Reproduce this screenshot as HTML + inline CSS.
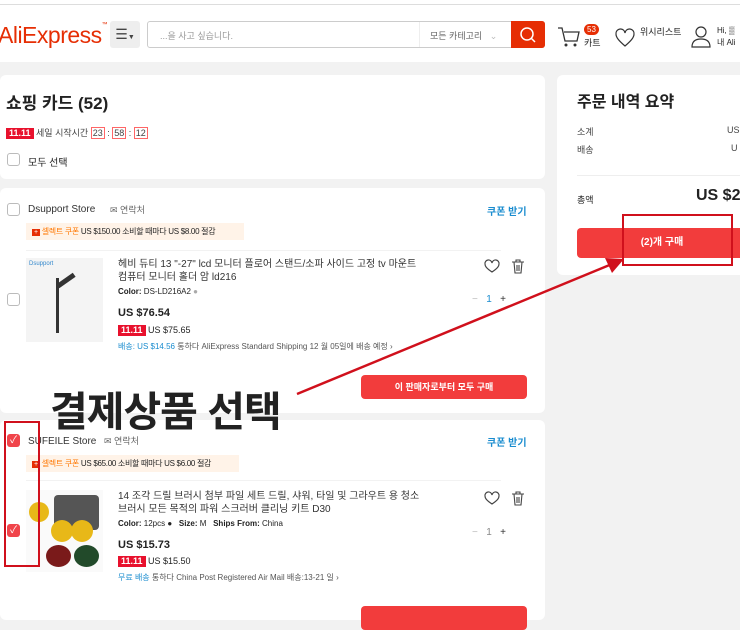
<!DOCTYPE html>
<html><head><meta charset="utf-8"><style>
*{margin:0;padding:0;box-sizing:border-box}
body{width:740px;height:616px;overflow:hidden;background:#f2f2f2;font-family:"Liberation Sans","Noto Sans CJK KR",sans-serif;color:#222;position:relative;font-size:11px}
.a{position:absolute;white-space:nowrap}
.card{position:absolute;background:#fff;border-radius:6px}
.cb{position:absolute;width:13px;height:13px;border:1px solid #bbb;border-radius:3px;background:#fff}
.cbr{position:absolute;width:13px;height:13px;border-radius:3px;background:#f0444a;color:#fff;font-size:10px;line-height:13px;text-align:center}
.tag{background:#e8112d;color:#fff;font-weight:bold;font-size:9px;padding:0 3px;line-height:11px;display:inline-block}
.blue{color:#1a8ccf}
.btn{position:absolute;background:#f23c3c;color:#fff;border-radius:4px;text-align:center;font-weight:bold}
</style></head><body>
<div class="a" style="left:0;top:0;width:740px;height:62px;background:#fff"></div>
<div class="a" style="left:0;top:4px;width:740px;height:1px;background:#ddd"></div>
<div class="a" style="left:-2px;top:22px;font-size:23px;color:#e62e04;letter-spacing:-0.5px">AliExpress<span style="font-size:6px;vertical-align:top">™</span></div>
<div class="a" style="left:110px;top:21px;width:30px;height:27px;background:#eee;border-radius:3px;text-align:center;line-height:27px;font-size:14px;color:#444">☰<span style="font-size:7px">▼</span></div>
<div class="a" style="left:147px;top:21px;width:398px;height:27px;border:1px solid #ccc;border-radius:3px"></div>
<div class="a" style="left:160px;top:29px;font-size:9px;color:#999">...을 사고 싶습니다.</div>
<div class="a" style="left:419px;top:22px;width:1px;height:25px;background:#eee"></div>
<div class="a" style="left:430px;top:29px;font-size:9px;color:#666">모든 카테고리 &nbsp; <span style="color:#bbb">⌄</span></div>
<div class="a" style="left:511px;top:21px;width:34px;height:27px;background:#e62e04;border-radius:0 3px 3px 0"></div>
<svg class="a" style="left:518px;top:25px" width="20" height="20"><circle cx="9" cy="9" r="6" stroke="#fff" stroke-width="1.5" fill="none"/><line x1="13" y1="13" x2="17" y2="17" stroke="#fff" stroke-width="1.5"/></svg>
<svg class="a" style="left:556px;top:24px" width="26" height="26"><path d="M2 4h4l3 13h12l2-9H8" stroke="#333" stroke-width="1.3" fill="none"/><circle cx="10" cy="21" r="1.5" fill="#333"/><circle cx="19" cy="21" r="1.5" fill="#333"/></svg>
<div class="a" style="left:584px;top:24px;width:15px;height:11px;background:#e62e04;border-radius:6px;color:#fff;font-size:8px;text-align:center;line-height:11px">53</div>
<div class="a" style="left:584px;top:36px;font-size:9px">카트</div>
<svg class="a" style="left:614px;top:27px" width="22" height="22"><path d="M11 19C4 13 2 10 2 7a4.5 4.5 0 0 1 9-1a4.5 4.5 0 0 1 9 1c0 3-2 6-9 12z" stroke="#333" stroke-width="1.2" fill="none"/></svg>
<div class="a" style="left:640px;top:25px;font-size:9px">위시리스트</div>
<svg class="a" style="left:690px;top:25px" width="22" height="24"><circle cx="11" cy="7" r="5" stroke="#333" stroke-width="1.2" fill="none"/><path d="M2 22c0-6 4-8 9-8s9 2 9 8z" stroke="#333" stroke-width="1.2" fill="none"/></svg>
<div class="a" style="left:717px;top:25px;font-size:8px;line-height:12px">Hi, ▒<br>내 Ali</div>

<div class="card" style="left:0;top:75px;width:545px;height:104px"></div>
<div class="a" style="left:6px;top:89px;font-size:17px;font-weight:bold">쇼핑 카드 (52)</div>
<div class="a" style="left:6px;top:126px;font-size:9px;color:#444"><span class="tag">11.11</span> 세일 시작시간 <span style="border:1px solid #f66;padding:0 1px">23</span> : <span style="border:1px solid #f66;padding:0 1px">58</span> : <span style="border:1px solid #f66;padding:0 1px">12</span></div>
<div class="cb" style="left:7px;top:153px"></div>
<div class="a" style="left:28px;top:154px;font-size:10px">모두 선택</div>

<div class="card" style="left:0;top:188px;width:545px;height:225px"></div>
<div class="cb" style="left:7px;top:203px"></div>
<div class="a" style="left:28px;top:204px;font-size:10px;color:#333">Dsupport Store</div>
<div class="a" style="left:110px;top:203px;font-size:9px;color:#666">✉ 연락처</div>
<div class="a blue" style="left:487px;top:203px;font-size:10px;font-weight:bold">쿠폰 받기</div>
<div class="a" style="left:26px;top:223px;width:218px;height:17px;background:#fff3e8;font-size:8px;line-height:17px;padding-left:6px;letter-spacing:-0.3px"><span style="background:#e62e04;color:#fff;font-size:7px;padding:0 2px">+</span> <span style="color:#f70">셀렉트 쿠폰</span> US $150.00 소비할 때마다 US $8.00 절감</div>
<div class="a" style="left:26px;top:250px;width:475px;height:1px;background:#f2f2f2"></div>
<div class="cb" style="left:7px;top:293px"></div>
<div class="a" style="left:26px;top:258px;width:77px;height:84px;background:#f4f4f4"><div style="position:absolute;left:30px;top:20px;width:3px;height:55px;background:#333"></div><div style="position:absolute;left:30px;top:20px;width:20px;height:5px;background:#333;transform:rotate(-35deg)"></div><div style="font-size:6px;color:#38c;padding:3px">Dsupport</div></div>
<div class="a" style="left:118px;top:258px;font-size:10px;line-height:13px;color:#333">헤비 듀티 13 "-27" lcd 모니터 플로어 스탠드/소파 사이드 고정 tv 마운트<br>컴퓨터 모니터 홀더 암 ld216</div>
<div class="a" style="left:118px;top:287px;font-size:8px"><b>Color:</b> DS-LD216A2 <span style="color:#aaa">●</span></div>
<div class="a" style="left:118px;top:307px;font-size:11px;font-weight:bold">US $76.54</div>
<div class="a" style="left:118px;top:325px;font-size:9px"><span class="tag">11.11</span> US $75.65</div>
<div class="a" style="left:118px;top:341px;font-size:8px;color:#555"><span class="blue">배송: US $14.56</span> 통하다 AliExpress Standard Shipping 12 월 05일에 배송 예정 ›</div>
<svg class="a" style="left:484px;top:259px" width="16" height="15"><path d="M8 13C2 9 1 7 1 5a3.3 3.3 0 0 1 7-1a3.3 3.3 0 0 1 7 1c0 2-1 4-7 8z" stroke="#444" stroke-width="1.2" fill="none"/></svg>
<svg class="a" style="left:511px;top:259px" width="14" height="15"><path d="M1 3h12M5 3V1h4v2M3 3l1 11h6l1-11M6 6v6M8 6v6" stroke="#444" stroke-width="1.1" fill="none"/></svg>
<div class="a" style="left:472px;top:294px;font-size:10px;color:#bbb">−&nbsp;&nbsp;&nbsp;<span class="blue">1</span>&nbsp;&nbsp;&nbsp;<span style="color:#333">+</span></div>
<div class="btn" style="left:361px;top:375px;width:166px;height:24px;line-height:24px;font-size:9px">이 판매자로부터 모두 구매</div>

<div class="card" style="left:0;top:420px;width:545px;height:200px"></div>
<div class="cbr" style="left:7px;top:434px">✓</div>
<div class="a" style="left:28px;top:436px;font-size:10px;color:#333">SUFEILE Store</div>
<div class="a" style="left:104px;top:434px;font-size:9px;color:#666">✉ 연락처</div>
<div class="a blue" style="left:487px;top:434px;font-size:10px;font-weight:bold">쿠폰 받기</div>
<div class="a" style="left:26px;top:455px;width:213px;height:17px;background:#fff3e8;font-size:8px;line-height:17px;padding-left:6px;letter-spacing:-0.3px"><span style="background:#e62e04;color:#fff;font-size:7px;padding:0 2px">+</span> <span style="color:#f70">셀렉트 쿠폰</span> US $65.00 소비할 때마다 US $6.00 절감</div>
<div class="a" style="left:26px;top:480px;width:475px;height:1px;background:#f2f2f2"></div>
<div class="cbr" style="left:7px;top:524px">✓</div>
<div class="a" style="left:26px;top:490px;width:77px;height:82px;background:#fafafa;overflow:hidden"><div style="position:absolute;left:28px;top:5px;width:45px;height:35px;background:#555;border-radius:4px"></div><div style="position:absolute;left:25px;top:30px;width:22px;height:22px;background:#e8b818;border-radius:50%"></div><div style="position:absolute;left:45px;top:30px;width:22px;height:22px;background:#e8b818;border-radius:50%"></div><div style="position:absolute;left:20px;top:55px;width:25px;height:22px;background:#7a1a1a;border-radius:50%"></div><div style="position:absolute;left:48px;top:55px;width:25px;height:22px;background:#224a2a;border-radius:50%"></div><div style="position:absolute;left:3px;top:12px;width:20px;height:20px;background:#e8b818;border-radius:50%"></div></div>
<div class="a" style="left:118px;top:490px;font-size:10px;line-height:13px;color:#333">14 조각 드릴 브러시 첨부 파일 세트 드릴, 샤워, 타일 및 그라우트 용 청소<br>브러시 모든 목적의 파워 스크러버 클리닝 키트 D30</div>
<div class="a" style="left:118px;top:519px;font-size:8px"><b>Color:</b> 12pcs ● &nbsp;&nbsp;<b>Size:</b> M &nbsp;&nbsp;<b>Ships From:</b> China</div>
<div class="a" style="left:118px;top:539px;font-size:11px;font-weight:bold">US $15.73</div>
<div class="a" style="left:118px;top:556px;font-size:9px"><span class="tag">11.11</span> US $15.50</div>
<div class="a" style="left:118px;top:572px;font-size:8px;color:#555"><span class="blue">무료 배송</span> 통하다 China Post Registered Air Mail 배송:13-21 일 ›</div>
<svg class="a" style="left:484px;top:491px" width="16" height="15"><path d="M8 13C2 9 1 7 1 5a3.3 3.3 0 0 1 7-1a3.3 3.3 0 0 1 7 1c0 2-1 4-7 8z" stroke="#444" stroke-width="1.2" fill="none"/></svg>
<svg class="a" style="left:511px;top:491px" width="14" height="15"><path d="M1 3h12M5 3V1h4v2M3 3l1 11h6l1-11M6 6v6M8 6v6" stroke="#444" stroke-width="1.1" fill="none"/></svg>
<div class="a" style="left:472px;top:527px;font-size:10px;color:#bbb">−&nbsp;&nbsp;&nbsp;<span style="color:#888">1</span>&nbsp;&nbsp;&nbsp;<span style="color:#333">+</span></div>
<div class="btn" style="left:361px;top:606px;width:166px;height:24px"></div>

<div class="card" style="left:557px;top:75px;width:190px;height:200px"></div>
<div class="a" style="left:577px;top:88px;font-size:16px;font-weight:bold">주문 내역 요약</div>
<div class="a" style="left:577px;top:125px;font-size:9px;color:#444">소계</div>
<div class="a" style="left:727px;top:125px;font-size:9px;color:#444">US</div>
<div class="a" style="left:577px;top:143px;font-size:9px;color:#444">배송</div>
<div class="a" style="left:731px;top:143px;font-size:9px;color:#444">U</div>
<div class="a" style="left:577px;top:175px;width:163px;height:1px;background:#eee"></div>
<div class="a" style="left:577px;top:193px;font-size:9px">총액</div>
<div class="a" style="left:696px;top:187px;font-size:16px;font-weight:bold">US $2</div>
<div class="btn" style="left:577px;top:228px;width:170px;height:30px;line-height:30px;font-size:10px">(2)개 구매</div>

<div class="a" style="left:50px;top:378px;font-size:41px;font-weight:bold;color:#222;letter-spacing:-1px">결제상품 선택</div>
<svg class="a" style="left:0;top:0" width="740" height="616"><line x1="297" y1="394" x2="612" y2="264" stroke="#d0101c" stroke-width="2.5"/><polygon points="624,259 605,258 612,273" fill="#d0101c"/><rect x="623" y="215" width="109" height="50" fill="none" stroke="#d0101c" stroke-width="2"/><rect x="5" y="422" width="34" height="144" fill="none" stroke="#d0101c" stroke-width="2"/></svg>
</body></html>
